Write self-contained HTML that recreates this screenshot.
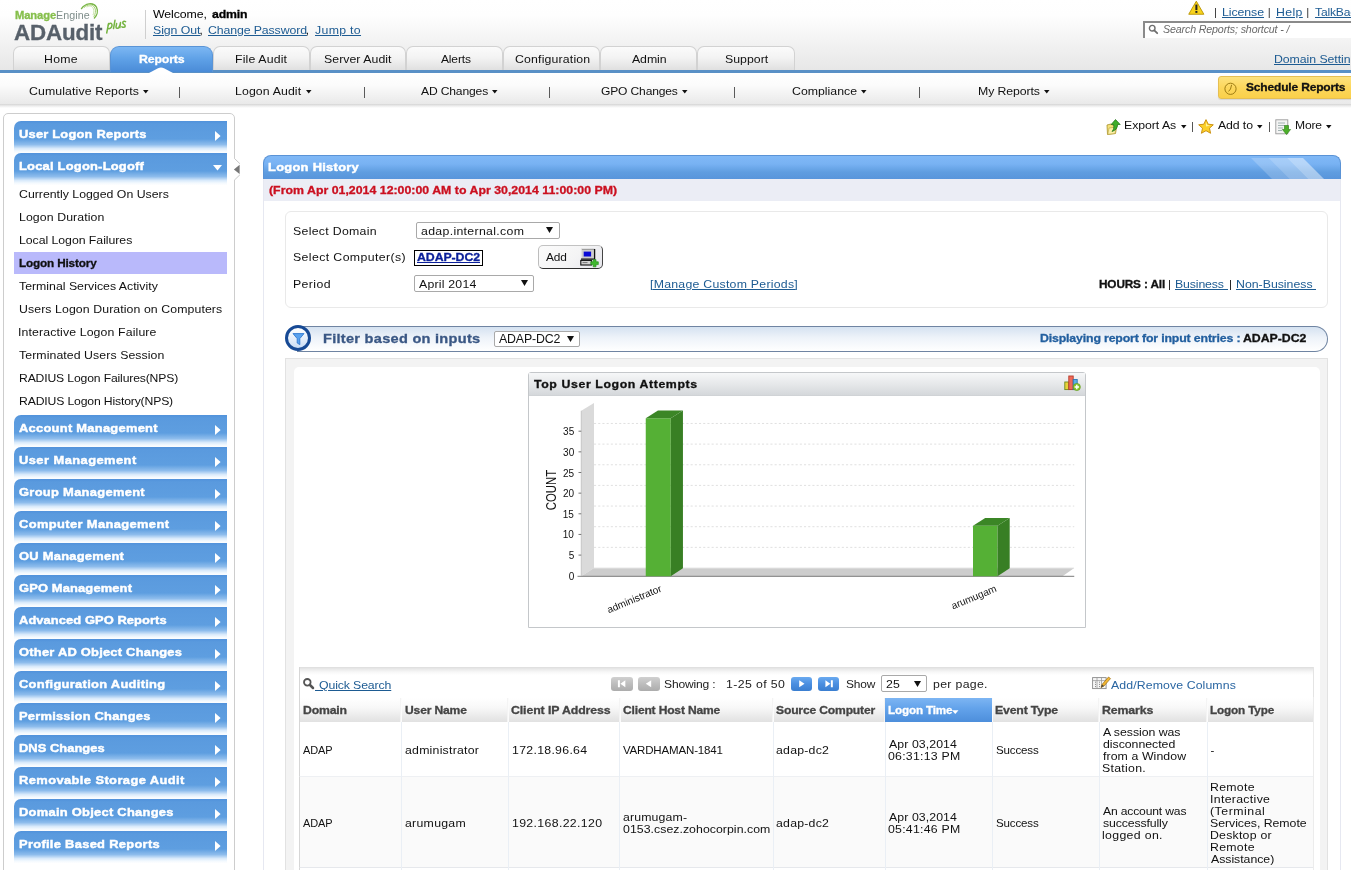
<!DOCTYPE html>
<html><head><meta charset="utf-8"><title>ADAudit Plus - Logon History</title>
<style>
html,body{margin:0;padding:0;background:#fff}
body{width:1351px;height:870px;overflow:hidden;position:relative;font-family:"Liberation Sans",sans-serif;font-size:11.5px;color:#000}
#pg{position:absolute;left:0;top:0;width:1351px;height:870px;overflow:hidden;will-change:transform}
.a{position:absolute;box-sizing:border-box}
.t{position:absolute;white-space:pre;line-height:1;transform-origin:0 0}
svg{position:absolute;overflow:visible}
</style></head>
<body>
<div id="pg">
<div class="a" style="left:0px;top:0px;width:1351px;height:70px;background:linear-gradient(to bottom,#ffffff 0%,#fefefe 22%,#f4f4f4 55%,#e7e7e7 100%);"></div>
<svg style="left:0;top:0" width="140" height="45" viewBox="0 0 140 45" fill="none" stroke-linecap="round"><path d="M81.5 8.6 C85 3.6,93 1.6,96.4 7 C98.4 11,97 15.5,94.4 18" stroke="#7ab648" stroke-width="1.4"/><path d="M84.2 7.4 C87.5 4.2,92.5 3.7,94.9 8 C96.2 11,95.4 14,93.9 16.4" stroke="#9ccc66" stroke-width="0.9"/><path d="M87 6.9 C89.5 5.3,92 5.6,93.4 8.8 C94.2 11,93.9 13,93.1 14.7" stroke="#b5da8a" stroke-width="0.7"/><g stroke="#76b442" stroke-width="1.5" stroke-linejoin="round"><path d="M108.6 23.4 L106.7 33"/><path d="M108.3 25 C109.5 22.8,112.2 22.6,112 25.4 C111.8 27.8,109.6 29.2,107.8 28.4"/><path d="M115 20.2 L113.5 28.6"/><path d="M116.6 23.6 L116 26.8 C115.8 28.6,117.6 28.8,118.8 27.4 C119.8 26,120.2 24.4,120.5 22.6 M120.5 22.6 L119.9 27.6"/><path d="M125.6 21.6 C124 20.8,122.4 21.6,122.8 23 C123.2 24.4,125.2 24.4,125.2 26 C125.2 27.6,123 27.6,121.9 26.8"/></g></svg>
<span class="t" style="left:14.52px;top:11px;font-size:10px;letter-spacing:-0.097px;transform:scaleX(1.1200);font-weight:bold;-webkit-text-stroke:0.3px;color:#86bf4c;">Manage</span>
<span class="t" style="left:55.64px;top:11px;font-size:10px;letter-spacing:0.057px;transform:scaleX(1.0700);color:#7e8d8a;">Engine</span>
<span class="t" style="left:14.33px;top:22px;font-size:22px;letter-spacing:-0.150px;transform:scaleX(1.0148);font-weight:bold;-webkit-text-stroke:0.3px;color:#57606a;">ADAudit</span>
<div class="a" style="left:145px;top:10px;width:1px;height:29px;background:#cfcfcf;"></div>
<span class="t" style="left:153.25px;top:9px;font-size:11.5px;letter-spacing:-0.087px;transform:scaleX(1.0700);">Welcome,</span>
<span class="t" style="left:211.63px;top:9px;font-size:11px;letter-spacing:-0.150px;transform:scaleX(1.1138);font-weight:bold;-webkit-text-stroke:0.3px;">admin</span>
<span class="t" style="left:152.63px;top:25px;font-size:11.5px;letter-spacing:-0.050px;transform:scaleX(1.0700);color:#1d5b92;text-decoration:underline;">Sign Out</span>
<span class="t" style="left:199.47px;top:25px;font-size:11.5px;">,</span>
<span class="t" style="left:208.13px;top:25px;font-size:11.5px;letter-spacing:-0.104px;transform:scaleX(1.0700);color:#1d5b92;text-decoration:underline;">Change Password</span>
<span class="t" style="left:305.71px;top:25px;font-size:11.5px;">,</span>
<span class="t" style="left:314.75px;top:25px;font-size:11.5px;letter-spacing:0.301px;transform:scaleX(1.0700);color:#1d5b92;text-decoration:underline;">Jump to</span>
<svg style="left:1188.3px;top:0px" width="16.6" height="15.6" viewBox="0 0 18 16"><path d="M9 0.8 L17.2 15 L0.8 15Z" fill="#f7d21c" stroke="#b89400" stroke-width="1" stroke-linejoin="round"/><rect x="8" y="4.5" width="2.2" height="6" fill="#222"/><rect x="8" y="11.5" width="2.2" height="2" fill="#222"/></svg>
<span class="t" style="left:1213.96px;top:7px;font-size:11.5px;color:#333;">|</span>
<span class="t" style="left:1221.77px;top:7px;font-size:11.5px;letter-spacing:-0.055px;transform:scaleX(1.0700);color:#1d5b92;text-decoration:underline;">License</span>
<span class="t" style="left:1267.66px;top:7px;font-size:11.5px;color:#333;">|</span>
<span class="t" style="left:1275.52px;top:7px;font-size:11.5px;letter-spacing:0.351px;transform:scaleX(1.0700);color:#1d5b92;text-decoration:underline;">Help</span>
<span class="t" style="left:1306.16px;top:7px;font-size:11.5px;color:#333;">|</span>
<span class="t" style="left:1314.51px;top:7px;font-size:11.5px;letter-spacing:-0.150px;transform:scaleX(1.0510);color:#1d5b92;text-decoration:underline;">TalkBack</span>
<div class="a" style="left:1143px;top:20.5px;width:230px;height:17px;background:#fff;border-top:2px solid #8a8a8a;border-left:2px solid #8a8a8a;"></div>
<svg style="left:1148px;top:24px" width="11" height="11" viewBox="0 0 11 11"><circle cx="4.2" cy="4.2" r="2.8" fill="none" stroke="#6e6e6e" stroke-width="1.4"/><path d="M6.3 6.3 L9.2 9.2" stroke="#6e6e6e" stroke-width="1.8" stroke-linecap="round"/></svg>
<span class="t" style="left:1162.93px;top:24px;font-size:10.5px;letter-spacing:-0.150px;transform:scaleX(1.0169);font-style:italic;color:#6a6a6a;">Search Reports; shortcut - /</span>
<span class="t" style="left:1273.77px;top:54px;font-size:11.5px;letter-spacing:-0.056px;transform:scaleX(1.0700);color:#1d5b92;text-decoration:underline;">Domain Settings</span>
<div class="a" style="left:13px;top:46px;width:97px;height:24.5px;border:1px solid #d2d2d2;border-bottom:none;border-radius:7px 7px 0 0;background:linear-gradient(to bottom,#fbfbfb 0%,#f3f3f3 45%,#dedede 100%);"></div>
<span class="t" style="left:44.02px;top:54px;font-size:11.5px;letter-spacing:0.232px;transform:scaleX(1.0700);color:#111;">Home</span>
<div class="a" style="left:213px;top:46px;width:96.5px;height:24.5px;border:1px solid #d2d2d2;border-bottom:none;border-radius:7px 7px 0 0;background:linear-gradient(to bottom,#fbfbfb 0%,#f3f3f3 45%,#dedede 100%);"></div>
<span class="t" style="left:234.77px;top:54px;font-size:11.5px;letter-spacing:0.147px;transform:scaleX(1.0700);color:#111;">File Audit</span>
<div class="a" style="left:309.5px;top:46px;width:96.5px;height:24.5px;border:1px solid #d2d2d2;border-bottom:none;border-radius:7px 7px 0 0;background:linear-gradient(to bottom,#fbfbfb 0%,#f3f3f3 45%,#dedede 100%);"></div>
<span class="t" style="left:324.38px;top:54px;font-size:11.5px;letter-spacing:0.036px;transform:scaleX(1.0700);color:#111;">Server Audit</span>
<div class="a" style="left:406px;top:46px;width:97px;height:24.5px;border:1px solid #d2d2d2;border-bottom:none;border-radius:7px 7px 0 0;background:linear-gradient(to bottom,#fbfbfb 0%,#f3f3f3 45%,#dedede 100%);"></div>
<span class="t" style="left:440.50px;top:54px;font-size:11.5px;letter-spacing:-0.150px;transform:scaleX(1.0450);color:#111;">Alerts</span>
<div class="a" style="left:503px;top:46px;width:97px;height:24.5px;border:1px solid #d2d2d2;border-bottom:none;border-radius:7px 7px 0 0;background:linear-gradient(to bottom,#fbfbfb 0%,#f3f3f3 45%,#dedede 100%);"></div>
<span class="t" style="left:514.88px;top:54px;font-size:11.5px;letter-spacing:0.157px;transform:scaleX(1.0700);color:#111;">Configuration</span>
<div class="a" style="left:600px;top:46px;width:97px;height:24.5px;border:1px solid #d2d2d2;border-bottom:none;border-radius:7px 7px 0 0;background:linear-gradient(to bottom,#fbfbfb 0%,#f3f3f3 45%,#dedede 100%);"></div>
<span class="t" style="left:632.25px;top:54px;font-size:11.5px;letter-spacing:-0.078px;transform:scaleX(1.0700);color:#111;">Admin</span>
<div class="a" style="left:697px;top:46px;width:97.5px;height:24.5px;border:1px solid #d2d2d2;border-bottom:none;border-radius:7px 7px 0 0;background:linear-gradient(to bottom,#fbfbfb 0%,#f3f3f3 45%,#dedede 100%);"></div>
<span class="t" style="left:724.63px;top:54px;font-size:11.5px;letter-spacing:0.027px;transform:scaleX(1.0700);color:#111;">Support</span>
<div class="a" style="left:0px;top:70px;width:1351px;height:3px;background:#5990c6;"></div>
<div class="a" style="left:110px;top:45.5px;width:103px;height:26.5px;border:1px solid #5a94d6;border-bottom:none;border-radius:9px 9px 0 0;background:linear-gradient(to bottom,#7cb7f3 0%,#5ea0e6 50%,#4a8bd7 100%);"></div>
<span class="t" style="left:138.64px;top:54px;font-size:11px;letter-spacing:-0.144px;transform:scaleX(1.1200);font-weight:bold;-webkit-text-stroke:0.3px;color:#fff;">Reports</span>
<svg style="left:149px;top:67px" width="24" height="6" viewBox="0 0 24 6"><path d="M0 6 L9 1.2 Q12 -0.4 15 1.2 L24 6Z" fill="#fff"/></svg>
<div class="a" style="left:0px;top:73px;width:1351px;height:30.5px;background:linear-gradient(to bottom,#ffffff 0%,#fbfbfb 40%,#e9e9e9 100%);"></div>
<div class="a" style="left:0px;top:103.5px;width:1351px;height:4px;background:linear-gradient(to bottom,#d4d4d4 0%,#ededed 50%,#ffffff 100%);"></div>
<span class="t" style="left:28.88px;top:86px;font-size:11.5px;letter-spacing:0.100px;transform:scaleX(1.0700);color:#111;">Cumulative Reports</span>
<svg style="left:142.5px;top:90px" width="5.5" height="3.5" viewBox="0 0 10 6"><path d="M0 0 L10 0 L5 6Z" fill="#111"/></svg>
<span class="t" style="left:235.27px;top:86px;font-size:11.5px;letter-spacing:0.106px;transform:scaleX(1.0700);color:#111;">Logon Audit</span>
<svg style="left:305.5px;top:90px" width="5.5" height="3.5" viewBox="0 0 10 6"><path d="M0 0 L10 0 L5 6Z" fill="#111"/></svg>
<span class="t" style="left:420.50px;top:86px;font-size:11.5px;letter-spacing:-0.150px;transform:scaleX(1.0529);color:#111;">AD Changes</span>
<svg style="left:491.5px;top:90px" width="5.5" height="3.5" viewBox="0 0 10 6"><path d="M0 0 L10 0 L5 6Z" fill="#111"/></svg>
<span class="t" style="left:601.15px;top:86px;font-size:11.5px;letter-spacing:-0.150px;transform:scaleX(1.0490);color:#111;">GPO Changes</span>
<svg style="left:681.5px;top:90px" width="5.5" height="3.5" viewBox="0 0 10 6"><path d="M0 0 L10 0 L5 6Z" fill="#111"/></svg>
<span class="t" style="left:791.63px;top:86px;font-size:11.5px;transform:scaleX(1.0700);color:#111;">Compliance</span>
<svg style="left:860.5px;top:90px" width="5.5" height="3.5" viewBox="0 0 10 6"><path d="M0 0 L10 0 L5 6Z" fill="#111"/></svg>
<span class="t" style="left:977.52px;top:86px;font-size:11.5px;letter-spacing:-0.094px;transform:scaleX(1.0700);color:#111;">My Reports</span>
<svg style="left:1043.5px;top:90px" width="5.5" height="3.5" viewBox="0 0 10 6"><path d="M0 0 L10 0 L5 6Z" fill="#111"/></svg>
<div class="a" style="left:178.75px;top:87px;width:1px;height:10.5px;background:#5a5a5a;"></div>
<div class="a" style="left:363.75px;top:87px;width:1px;height:10.5px;background:#5a5a5a;"></div>
<div class="a" style="left:548.75px;top:87px;width:1px;height:10.5px;background:#5a5a5a;"></div>
<div class="a" style="left:733.75px;top:87px;width:1px;height:10.5px;background:#5a5a5a;"></div>
<div class="a" style="left:918.75px;top:87px;width:1px;height:10.5px;background:#5a5a5a;"></div>
<div class="a" style="left:1218px;top:76px;width:140px;height:23px;border:1px solid #e6bf52;border-radius:3px;background:linear-gradient(to bottom,#fde27e 0%,#fcd75c 50%,#fad04a 100%);box-shadow:0 1px 1px rgba(0,0,0,.10);"></div>
<svg style="left:1224px;top:82px" width="13" height="13" viewBox="0 0 13 13"><circle cx="6.5" cy="6.8" r="5.6" fill="none" stroke="#92700a" stroke-width="0.9"/><path d="M7.6 2.8 L6.5 7 L4.6 9.4" fill="none" stroke="#92700a" stroke-width="0.9"/></svg>
<span class="t" style="left:1246.14px;top:82px;font-size:11px;letter-spacing:-0.150px;transform:scaleX(1.0901);font-weight:bold;-webkit-text-stroke:0.3px;color:#111;">Schedule Reports</span>
<div class="a" style="left:3px;top:112.5px;width:231.5px;height:770px;border:1px solid #cdcdcd;border-radius:5px;background:#fff;"></div>
<div class="a" style="left:14px;top:121px;width:212.5px;height:32px;border-radius:7px 0 0 0;background:linear-gradient(to bottom,#5192db 0,#5a9ade 3px,#5e9ee0 18px,#8dbcec 23.5px,#d9eafb 27.5px,#f3f9fe 30px,#fdfeff 32px);"></div>
<span class="t" style="left:18.73px;top:129px;font-size:11.5px;letter-spacing:0.191px;transform:scaleX(1.1200);font-weight:bold;-webkit-text-stroke:0.3px;color:#fff;-webkit-text-stroke:0.45px #fff;">User Logon Reports</span>
<svg style="left:214.5px;top:130.5px" width="6" height="10" viewBox="0 0 6 10"><path d="M0 0 L5.6 5 L0 10Z" fill="#fff"/></svg>
<div class="a" style="left:14px;top:153px;width:212.5px;height:32px;border-radius:7px 0 0 0;background:linear-gradient(to bottom,#5192db 0,#5a9ade 3px,#5e9ee0 18px,#8dbcec 23.5px,#d9eafb 27.5px,#f3f9fe 30px,#fdfeff 32px);"></div>
<span class="t" style="left:18.60px;top:161px;font-size:11.5px;letter-spacing:0.208px;transform:scaleX(1.1200);font-weight:bold;-webkit-text-stroke:0.3px;color:#fff;-webkit-text-stroke:0.45px #fff;">Local Logon-Logoff</span>
<svg style="left:212.5px;top:164.5px" width="9" height="6" viewBox="0 0 9 6"><path d="M0 0 L9 0 L4.5 5.6Z" fill="#fff"/></svg>
<span class="t" style="left:18.88px;top:189px;font-size:11.5px;transform:scaleX(1.0700);color:#111;">Currently Logged On Users</span>
<span class="t" style="left:18.52px;top:212px;font-size:11.5px;letter-spacing:0.085px;transform:scaleX(1.0700);color:#111;">Logon Duration</span>
<span class="t" style="left:18.52px;top:235px;font-size:11.5px;letter-spacing:-0.047px;transform:scaleX(1.0700);color:#111;">Local Logon Failures</span>
<div class="a" style="left:14px;top:251.75px;width:212.5px;height:22.5px;background:#b9b9fb;"></div>
<span class="t" style="left:18.68px;top:258px;font-size:11px;letter-spacing:-0.150px;transform:scaleX(1.0675);font-weight:bold;-webkit-text-stroke:0.3px;color:#111;">Logon History</span>
<span class="t" style="left:19.25px;top:281px;font-size:11.5px;transform:scaleX(1.0700);color:#111;">Terminal Services Activity</span>
<span class="t" style="left:18.52px;top:304px;font-size:11.5px;letter-spacing:0.081px;transform:scaleX(1.0700);color:#111;">Users Logon Duration on Computers</span>
<span class="t" style="left:18.39px;top:327px;font-size:11.5px;letter-spacing:0.117px;transform:scaleX(1.0700);color:#111;">Interactive Logon Failure</span>
<span class="t" style="left:19.25px;top:350px;font-size:11.5px;letter-spacing:0.071px;transform:scaleX(1.0700);color:#111;">Terminated Users Session</span>
<span class="t" style="left:18.53px;top:373px;font-size:11.5px;letter-spacing:-0.150px;transform:scaleX(1.0597);color:#111;">RADIUS Logon Failures(NPS)</span>
<span class="t" style="left:18.52px;top:396px;font-size:11.5px;letter-spacing:-0.150px;transform:scaleX(1.0611);color:#111;">RADIUS Logon History(NPS)</span>
<div class="a" style="left:14px;top:415px;width:212.5px;height:32px;border-radius:7px 0 0 0;background:linear-gradient(to bottom,#5192db 0,#5a9ade 3px,#5e9ee0 18px,#8dbcec 23.5px,#d9eafb 27.5px,#f3f9fe 30px,#fdfeff 32px);"></div>
<span class="t" style="left:19.11px;top:423px;font-size:11.5px;letter-spacing:0.246px;transform:scaleX(1.1200);font-weight:bold;-webkit-text-stroke:0.3px;color:#fff;-webkit-text-stroke:0.45px #fff;">Account Management</span>
<svg style="left:214.5px;top:424.5px" width="6" height="10" viewBox="0 0 6 10"><path d="M0 0 L5.6 5 L0 10Z" fill="#fff"/></svg>
<div class="a" style="left:14px;top:447px;width:212.5px;height:32px;border-radius:7px 0 0 0;background:linear-gradient(to bottom,#5192db 0,#5a9ade 3px,#5e9ee0 18px,#8dbcec 23.5px,#d9eafb 27.5px,#f3f9fe 30px,#fdfeff 32px);"></div>
<span class="t" style="left:18.73px;top:455px;font-size:11.5px;letter-spacing:0.399px;transform:scaleX(1.1200);font-weight:bold;-webkit-text-stroke:0.3px;color:#fff;-webkit-text-stroke:0.45px #fff;">User Management</span>
<svg style="left:214.5px;top:456.5px" width="6" height="10" viewBox="0 0 6 10"><path d="M0 0 L5.6 5 L0 10Z" fill="#fff"/></svg>
<div class="a" style="left:14px;top:479px;width:212.5px;height:32px;border-radius:7px 0 0 0;background:linear-gradient(to bottom,#5192db 0,#5a9ade 3px,#5e9ee0 18px,#8dbcec 23.5px,#d9eafb 27.5px,#f3f9fe 30px,#fdfeff 32px);"></div>
<span class="t" style="left:18.98px;top:487px;font-size:11.5px;letter-spacing:0.280px;transform:scaleX(1.1200);font-weight:bold;-webkit-text-stroke:0.3px;color:#fff;-webkit-text-stroke:0.45px #fff;">Group Management</span>
<svg style="left:214.5px;top:488.5px" width="6" height="10" viewBox="0 0 6 10"><path d="M0 0 L5.6 5 L0 10Z" fill="#fff"/></svg>
<div class="a" style="left:14px;top:511px;width:212.5px;height:32px;border-radius:7px 0 0 0;background:linear-gradient(to bottom,#5192db 0,#5a9ade 3px,#5e9ee0 18px,#8dbcec 23.5px,#d9eafb 27.5px,#f3f9fe 30px,#fdfeff 32px);"></div>
<span class="t" style="left:18.98px;top:519px;font-size:11.5px;letter-spacing:0.337px;transform:scaleX(1.1200);font-weight:bold;-webkit-text-stroke:0.3px;color:#fff;-webkit-text-stroke:0.45px #fff;">Computer Management</span>
<svg style="left:214.5px;top:520.5px" width="6" height="10" viewBox="0 0 6 10"><path d="M0 0 L5.6 5 L0 10Z" fill="#fff"/></svg>
<div class="a" style="left:14px;top:543px;width:212.5px;height:32px;border-radius:7px 0 0 0;background:linear-gradient(to bottom,#5192db 0,#5a9ade 3px,#5e9ee0 18px,#8dbcec 23.5px,#d9eafb 27.5px,#f3f9fe 30px,#fdfeff 32px);"></div>
<span class="t" style="left:18.98px;top:551px;font-size:11.5px;letter-spacing:0.243px;transform:scaleX(1.1200);font-weight:bold;-webkit-text-stroke:0.3px;color:#fff;-webkit-text-stroke:0.45px #fff;">OU Management</span>
<svg style="left:214.5px;top:552.5px" width="6" height="10" viewBox="0 0 6 10"><path d="M0 0 L5.6 5 L0 10Z" fill="#fff"/></svg>
<div class="a" style="left:14px;top:575px;width:212.5px;height:32px;border-radius:7px 0 0 0;background:linear-gradient(to bottom,#5192db 0,#5a9ade 3px,#5e9ee0 18px,#8dbcec 23.5px,#d9eafb 27.5px,#f3f9fe 30px,#fdfeff 32px);"></div>
<span class="t" style="left:18.98px;top:583px;font-size:11.5px;letter-spacing:0.137px;transform:scaleX(1.1200);font-weight:bold;-webkit-text-stroke:0.3px;color:#fff;-webkit-text-stroke:0.45px #fff;">GPO Management</span>
<svg style="left:214.5px;top:584.5px" width="6" height="10" viewBox="0 0 6 10"><path d="M0 0 L5.6 5 L0 10Z" fill="#fff"/></svg>
<div class="a" style="left:14px;top:607px;width:212.5px;height:32px;border-radius:7px 0 0 0;background:linear-gradient(to bottom,#5192db 0,#5a9ade 3px,#5e9ee0 18px,#8dbcec 23.5px,#d9eafb 27.5px,#f3f9fe 30px,#fdfeff 32px);"></div>
<span class="t" style="left:19.11px;top:615px;font-size:11.5px;letter-spacing:0.075px;transform:scaleX(1.1200);font-weight:bold;-webkit-text-stroke:0.3px;color:#fff;-webkit-text-stroke:0.45px #fff;">Advanced GPO Reports</span>
<svg style="left:214.5px;top:616.5px" width="6" height="10" viewBox="0 0 6 10"><path d="M0 0 L5.6 5 L0 10Z" fill="#fff"/></svg>
<div class="a" style="left:14px;top:639px;width:212.5px;height:32px;border-radius:7px 0 0 0;background:linear-gradient(to bottom,#5192db 0,#5a9ade 3px,#5e9ee0 18px,#8dbcec 23.5px,#d9eafb 27.5px,#f3f9fe 30px,#fdfeff 32px);"></div>
<span class="t" style="left:18.98px;top:647px;font-size:11.5px;letter-spacing:0.213px;transform:scaleX(1.1200);font-weight:bold;-webkit-text-stroke:0.3px;color:#fff;-webkit-text-stroke:0.45px #fff;">Other AD Object Changes</span>
<svg style="left:214.5px;top:648.5px" width="6" height="10" viewBox="0 0 6 10"><path d="M0 0 L5.6 5 L0 10Z" fill="#fff"/></svg>
<div class="a" style="left:14px;top:671px;width:212.5px;height:32px;border-radius:7px 0 0 0;background:linear-gradient(to bottom,#5192db 0,#5a9ade 3px,#5e9ee0 18px,#8dbcec 23.5px,#d9eafb 27.5px,#f3f9fe 30px,#fdfeff 32px);"></div>
<span class="t" style="left:18.98px;top:679px;font-size:11.5px;letter-spacing:0.273px;transform:scaleX(1.1200);font-weight:bold;-webkit-text-stroke:0.3px;color:#fff;-webkit-text-stroke:0.45px #fff;">Configuration Auditing</span>
<svg style="left:214.5px;top:680.5px" width="6" height="10" viewBox="0 0 6 10"><path d="M0 0 L5.6 5 L0 10Z" fill="#fff"/></svg>
<div class="a" style="left:14px;top:703px;width:212.5px;height:32px;border-radius:7px 0 0 0;background:linear-gradient(to bottom,#5192db 0,#5a9ade 3px,#5e9ee0 18px,#8dbcec 23.5px,#d9eafb 27.5px,#f3f9fe 30px,#fdfeff 32px);"></div>
<span class="t" style="left:18.60px;top:711px;font-size:11.5px;letter-spacing:0.205px;transform:scaleX(1.1200);font-weight:bold;-webkit-text-stroke:0.3px;color:#fff;-webkit-text-stroke:0.45px #fff;">Permission Changes</span>
<svg style="left:214.5px;top:712.5px" width="6" height="10" viewBox="0 0 6 10"><path d="M0 0 L5.6 5 L0 10Z" fill="#fff"/></svg>
<div class="a" style="left:14px;top:735px;width:212.5px;height:32px;border-radius:7px 0 0 0;background:linear-gradient(to bottom,#5192db 0,#5a9ade 3px,#5e9ee0 18px,#8dbcec 23.5px,#d9eafb 27.5px,#f3f9fe 30px,#fdfeff 32px);"></div>
<span class="t" style="left:18.60px;top:743px;font-size:11.5px;letter-spacing:0.036px;transform:scaleX(1.1200);font-weight:bold;-webkit-text-stroke:0.3px;color:#fff;-webkit-text-stroke:0.45px #fff;">DNS Changes</span>
<svg style="left:214.5px;top:744.5px" width="6" height="10" viewBox="0 0 6 10"><path d="M0 0 L5.6 5 L0 10Z" fill="#fff"/></svg>
<div class="a" style="left:14px;top:767px;width:212.5px;height:32px;border-radius:7px 0 0 0;background:linear-gradient(to bottom,#5192db 0,#5a9ade 3px,#5e9ee0 18px,#8dbcec 23.5px,#d9eafb 27.5px,#f3f9fe 30px,#fdfeff 32px);"></div>
<span class="t" style="left:18.60px;top:775px;font-size:11.5px;letter-spacing:0.367px;transform:scaleX(1.1200);font-weight:bold;-webkit-text-stroke:0.3px;color:#fff;-webkit-text-stroke:0.45px #fff;">Removable Storage Audit</span>
<svg style="left:214.5px;top:776.5px" width="6" height="10" viewBox="0 0 6 10"><path d="M0 0 L5.6 5 L0 10Z" fill="#fff"/></svg>
<div class="a" style="left:14px;top:799px;width:212.5px;height:32px;border-radius:7px 0 0 0;background:linear-gradient(to bottom,#5192db 0,#5a9ade 3px,#5e9ee0 18px,#8dbcec 23.5px,#d9eafb 27.5px,#f3f9fe 30px,#fdfeff 32px);"></div>
<span class="t" style="left:18.60px;top:807px;font-size:11.5px;letter-spacing:0.247px;transform:scaleX(1.1200);font-weight:bold;-webkit-text-stroke:0.3px;color:#fff;-webkit-text-stroke:0.45px #fff;">Domain Object Changes</span>
<svg style="left:214.5px;top:808.5px" width="6" height="10" viewBox="0 0 6 10"><path d="M0 0 L5.6 5 L0 10Z" fill="#fff"/></svg>
<div class="a" style="left:14px;top:831px;width:212.5px;height:32px;border-radius:7px 0 0 0;background:linear-gradient(to bottom,#5192db 0,#5a9ade 3px,#5e9ee0 18px,#8dbcec 23.5px,#d9eafb 27.5px,#f3f9fe 30px,#fdfeff 32px);"></div>
<span class="t" style="left:18.60px;top:839px;font-size:11.5px;letter-spacing:0.271px;transform:scaleX(1.1200);font-weight:bold;-webkit-text-stroke:0.3px;color:#fff;-webkit-text-stroke:0.45px #fff;">Profile Based Reports</span>
<svg style="left:214.5px;top:840.5px" width="6" height="10" viewBox="0 0 6 10"><path d="M0 0 L5.6 5 L0 10Z" fill="#fff"/></svg>
<svg style="left:233px;top:158px" width="8" height="23" viewBox="0 0 8 23"><path d="M0 0 L1.5 0.5 L6.9 5.7 L6.9 16.8 L1.5 22 L0 22.5Z" fill="#fff"/><path d="M1.4 0.4 L6.9 5.7 M6.9 16.8 L1.4 22.1" fill="none" stroke="#c8c8c8" stroke-width="1"/><path d="M0.9 11.4 L6.6 6.8 L6.6 16Z" fill="#777"/></svg>
<svg style="left:1106px;top:118.5px" width="15" height="16" viewBox="0 0 15 16"><path d="M1 6 L5 5 L6.5 6 L11 5.5 L9.5 14.5 L1.5 15.5Z" fill="#f5e27a" stroke="#a8912a" stroke-width="0.8"/><path d="M3 9 L10 8 L9 14.5 L1.8 15.3Z" fill="#fbf0a8" stroke="#b9a340" stroke-width="0.6"/><path d="M9.5 0.5 L14.2 5.5 L11.6 5.5 C11.6 9,9.5 11.5,6 12.5 C8 10.5,8 8,7.6 5.5 L5.2 5.5Z" fill="#3fae2a" stroke="#1d6e12" stroke-width="0.7"/></svg>
<span class="t" style="left:1124.27px;top:120px;font-size:11.5px;letter-spacing:-0.051px;transform:scaleX(1.0700);color:#111;">Export As</span>
<svg style="left:1180.5px;top:124.5px" width="5.5" height="3.5" viewBox="0 0 10 6"><path d="M0 0 L10 0 L5 6Z" fill="#111"/></svg>
<div class="a" style="left:1191.5px;top:121.5px;width:1px;height:10px;background:#555;"></div>
<svg style="left:1198px;top:119px" width="16" height="15" viewBox="0 0 16 15"><path d="M8 0.6 L10.2 5.2 L15.3 5.8 L11.5 9.2 L12.6 14.3 L8 11.7 L3.4 14.3 L4.5 9.2 L0.7 5.8 L5.8 5.2Z" fill="#fbd02a" stroke="#c78a07" stroke-width="0.9" stroke-linejoin="round"/><path d="M8 3 L9.3 6 L12.5 6.4 L8 7.5Z" fill="#fff2a0"/></svg>
<span class="t" style="left:1218.25px;top:120px;font-size:11.5px;letter-spacing:-0.106px;transform:scaleX(1.0700);color:#111;">Add to</span>
<svg style="left:1257.25px;top:124.5px" width="5.5" height="3.5" viewBox="0 0 10 6"><path d="M0 0 L10 0 L5 6Z" fill="#111"/></svg>
<div class="a" style="left:1268.5px;top:121.5px;width:1px;height:10px;background:#555;"></div>
<svg style="left:1275px;top:118.5px" width="16" height="16" viewBox="0 0 16 16"><rect x="0.8" y="0.8" width="12" height="14" fill="#f4f4f4" stroke="#9a9a9a" stroke-width="0.9"/><path d="M3 4 H10 M3 6.5 H10 M3 9 H8 M3 11.5 H7" stroke="#9aa" stroke-width="0.9"/><path d="M9.5 6.5 H13.5 V10.5 H15.6 L11.5 15.6 L7.4 10.5 H9.5Z" fill="#4caf2a" stroke="#2a7a14" stroke-width="0.6"/></svg>
<span class="t" style="left:1295.03px;top:120px;font-size:11.5px;letter-spacing:-0.150px;transform:scaleX(1.0505);color:#111;">More</span>
<svg style="left:1326px;top:124.5px" width="5.5" height="3.5" viewBox="0 0 10 6"><path d="M0 0 L10 0 L5 6Z" fill="#111"/></svg>
<div class="a" style="left:263px;top:166px;width:1078px;height:740px;border:1px solid #e6e8f1;border-top:none;background:#fff;"></div>
<div class="a" style="left:263px;top:155px;width:1078px;height:24px;border-radius:8px 8px 0 0;border:1px solid #5a93d6;border-bottom:none;background:linear-gradient(to bottom,#80b8f6 0%,#78b2f3 35%,#5f9de0 70%,#5895db 100%);overflow:hidden;"><svg style="left:987px;top:-1px" width="80" height="24" viewBox="0 0 80 24"><path d="M0 3 L17.5 3 L38.5 24 L21 24Z" fill="#fff" opacity=".2"/><path d="M17.5 3 L36 3 L57 24 L38.5 24Z" fill="#fff" opacity=".32"/><path d="M36 3 L52 3 L73 24 L57 24Z" fill="#fff" opacity=".46"/></svg></div>
<span class="t" style="left:267.85px;top:162px;font-size:11.5px;letter-spacing:0.257px;transform:scaleX(1.1200);font-weight:bold;-webkit-text-stroke:0.3px;color:#fff;-webkit-text-stroke:0.45px #fff;">Logon History</span>
<div class="a" style="left:264px;top:179px;width:1076px;height:21.5px;background:#ebedf5;"></div>
<span class="t" style="left:269.38px;top:185px;font-size:11px;letter-spacing:0.015px;transform:scaleX(1.1200);font-weight:bold;-webkit-text-stroke:0.3px;color:#cb1020;">(From Apr 01,2014 12:00:00 AM to Apr 30,2014 11:00:00 PM)</span>
<div class="a" style="left:285px;top:210.5px;width:1043px;height:97.5px;border:1px solid #e9e9e9;border-radius:6px;background:#fff;"></div>
<span class="t" style="left:293.13px;top:226px;font-size:11.5px;letter-spacing:0.282px;transform:scaleX(1.0700);color:#111;">Select Domain</span>
<span class="t" style="left:293.13px;top:252px;font-size:11.5px;letter-spacing:0.366px;transform:scaleX(1.0700);color:#111;">Select Computer(s)</span>
<span class="t" style="left:292.77px;top:279px;font-size:11.5px;letter-spacing:0.380px;transform:scaleX(1.0700);color:#111;">Period</span>
<div class="a" style="left:416px;top:222px;width:143.5px;height:16.5px;border:1px solid #a9a9a9;border-radius:2px;background:#fff;"></div>
<span class="t" style="left:420.76px;top:226px;font-size:11.5px;letter-spacing:0.301px;transform:scaleX(1.0700);color:#111;">adap.internal.com</span>
<svg style="left:546.25px;top:227px" width="7" height="6" viewBox="0 0 7 6"><path d="M0 0 L7 0 L3.5 6Z" fill="#111"/></svg>
<div class="a" style="left:414px;top:250px;width:69px;height:16px;border:1px solid #000;background:#fff;"></div>
<span class="t" style="left:417.13px;top:252px;font-size:11px;letter-spacing:-0.074px;transform:scaleX(1.1200);font-weight:bold;-webkit-text-stroke:0.3px;color:#0a1f9a;text-decoration:underline;">ADAP-DC2</span>
<div class="a" style="left:538px;top:245px;width:65px;height:24px;border:1px solid;border-color:#c2c2c2 #444 #2e2e2e #bdbdbd;border-bottom-width:1.5px;border-radius:5px;background:linear-gradient(135deg,#fbfbfb 0%,#f4f4f5 55%,#e6e6ec 100%);"></div>
<span class="t" style="left:546.30px;top:252px;font-size:11.5px;letter-spacing:-0.150px;transform:scaleX(1.0328);color:#111;">Add</span>
<svg style="left:579px;top:248px" width="20" height="19" viewBox="0 0 20 19"><rect x="2" y="1" width="14" height="10.4" fill="#cdcdcd"/><path d="M2.2 1.3 H15.6" fill="none" stroke="#8a8a8a" stroke-width="0.9"/><path d="M2.4 1 V11.2" stroke="#e8e8e8" stroke-width="0.9"/><path d="M15.6 1 V11.4 M2 11.2 H16" stroke="#111" stroke-width="1.3"/><rect x="4.7" y="3.6" width="7.4" height="4.9" fill="#0a0ad6"/><rect x="1.8" y="12.4" width="10.6" height="4.6" fill="#d4d4d4" stroke="#111" stroke-width="1.1"/><path d="M3.5 14.6 H8.5" stroke="#777" stroke-width="1"/><path d="M14.2 11.6 H17 V13.8 H19.3 V16.6 H17 V18.8 H14.2 V16.6 H11.9 V13.8 H14.2Z" fill="#3fb82e" stroke="#2a9220" stroke-width="0.7" stroke-linejoin="round"/></svg>
<div class="a" style="left:414px;top:275px;width:120px;height:16.5px;border:1px solid #a9a9a9;border-radius:2px;background:#fff;"></div>
<span class="t" style="left:419.25px;top:279px;font-size:11.5px;letter-spacing:0.195px;transform:scaleX(1.0700);color:#111;">April 2014</span>
<svg style="left:520.5px;top:280px" width="7" height="6" viewBox="0 0 7 6"><path d="M0 0 L7 0 L3.5 6Z" fill="#111"/></svg>
<span class="t" style="left:649.64px;top:279px;font-size:11.5px;letter-spacing:0.233px;transform:scaleX(1.0700);color:#1d5b92;text-decoration:underline;">[Manage Custom Periods]</span>
<span class="t" style="left:1099.42px;top:279px;font-size:11px;letter-spacing:-0.150px;transform:scaleX(1.0732);font-weight:bold;-webkit-text-stroke:0.3px;color:#111;">HOURS : All</span>
<span class="t" style="left:1167.96px;top:279px;font-size:11.5px;color:#111;">|</span>
<span class="t" style="left:1175.02px;top:279px;font-size:11.5px;letter-spacing:-0.131px;transform:scaleX(1.0700);color:#1d5b92;text-decoration:underline;">Business</span>
<div class="a" style="left:1223px;top:289px;width:5px;height:1px;background:#1d5b92;"></div>
<span class="t" style="left:1228.96px;top:279px;font-size:11.5px;color:#111;">|</span>
<span class="t" style="left:1235.52px;top:279px;font-size:11.5px;transform:scaleX(1.0700);color:#1d5b92;text-decoration:underline;">Non-Business</span>
<div class="a" style="left:1311px;top:289px;width:5px;height:1px;background:#1d5b92;"></div>
<div class="a" style="left:297px;top:325.5px;width:1031px;height:26px;border:1px solid #6f84a2;border-left:none;border-radius:0 13px 13px 0;background:linear-gradient(to bottom,#d5e2f1 0%,#eef3f9 45%,#ffffff 100%);"></div>
<div class="a" style="left:284.7px;top:325px;width:26.4px;height:26.4px;border:3px solid #174a95;border-radius:50%;background:linear-gradient(to bottom,#ffffff 0%,#e4eefa 55%,#c9dcf4 100%);"></div>
<svg style="left:284.5px;top:324.5px" width="27" height="27" viewBox="0 0 27 27"><path d="M8 8.6 H19 L14.8 13.6 V19.6 L12.2 18 V13.6Z" fill="#5aa2ee" stroke="#2f78d0" stroke-width="0.9" stroke-linejoin="round"/></svg>
<span class="t" style="left:322.73px;top:332px;font-size:13px;letter-spacing:0.248px;transform:scaleX(1.1200);font-weight:bold;-webkit-text-stroke:0.3px;color:#3a5784;">Filter based on inputs</span>
<div class="a" style="left:493.5px;top:330.5px;width:86.5px;height:16.5px;border:1px solid #a9a9a9;border-radius:2px;background:#fff;"></div>
<span class="t" style="left:498.75px;top:333px;font-size:12px;letter-spacing:-0.150px;transform:scaleX(1.0284);color:#111;">ADAP-DC2</span>
<svg style="left:567px;top:335.5px" width="7" height="6" viewBox="0 0 7 6"><path d="M0 0 L7 0 L3.5 6Z" fill="#111"/></svg>
<span class="t" style="left:1039.64px;top:333px;font-size:11px;letter-spacing:-0.137px;transform:scaleX(1.1200);font-weight:bold;-webkit-text-stroke:0.3px;color:#225f9f;">Displaying report for input entries :</span>
<span class="t" style="left:1243.13px;top:333px;font-size:11px;letter-spacing:-0.042px;transform:scaleX(1.1200);font-weight:bold;-webkit-text-stroke:0.3px;color:#111;">ADAP-DC2</span>
<div class="a" style="left:285px;top:357.5px;width:1043px;height:540px;border:1px solid #e2e2e2;background:#f3f3f3;"></div>
<div class="a" style="left:293.5px;top:366.5px;width:1026.5px;height:540px;border-radius:5px;background:#fff;"></div>
<div class="a" style="left:527.5px;top:372px;width:558.5px;height:255.5px;border:1px solid #c4c7ca;border-radius:3px 3px 0 0;background:#fff;"></div>
<div class="a" style="left:528.5px;top:373px;width:556.5px;height:22.5px;border-bottom:1px solid #d0d3d6;background:linear-gradient(to bottom,#f6f7f8 0%,#e6e8ea 50%,#d5d8db 100%);"></div>
<span class="t" style="left:533.63px;top:379px;font-size:11px;letter-spacing:0.535px;transform:scaleX(1.1200);font-weight:bold;-webkit-text-stroke:0.3px;color:#111;">Top User Logon Attempts</span>
<svg style="left:1064px;top:375px" width="17" height="16" viewBox="0 0 17 16"><rect x="0.8" y="7" width="4" height="7.6" fill="#e8d23a" stroke="#6f8a1c" stroke-width="0.9"/><rect x="4.8" y="1" width="4.4" height="13.6" fill="#ee6a5a" stroke="#b73a2a" stroke-width="0.9"/><rect x="9.2" y="4.5" width="4" height="10.1" fill="#5ab0e8" stroke="#2a78b4" stroke-width="0.9"/><circle cx="12.8" cy="12" r="3.6" fill="#8ac62a" stroke="#5a9414" stroke-width="0.6"/><path d="M12.8 9.8 V14.2 M10.6 12 H15" stroke="#fff" stroke-width="1.4"/></svg>
<svg style="left:528px;top:396px" width="557" height="231" viewBox="528 396 557 231"><path d="M581.25 410.8 L594 403 L594 568 L581.25 576.3Z" fill="#dadada"/><path d="M581.25 576.3 L594 568 L1074.25 568 L1062.5 576.3Z" fill="#cdcdcd"/><path d="M594 547.35 H1074.25" stroke="#e0e0e0" stroke-width="1" stroke-dasharray="2.1 2.1"/><path d="M594 526.70 H1074.25" stroke="#e0e0e0" stroke-width="1" stroke-dasharray="2.1 2.1"/><path d="M594 506.05 H1074.25" stroke="#e0e0e0" stroke-width="1" stroke-dasharray="2.1 2.1"/><path d="M594 485.40 H1074.25" stroke="#e0e0e0" stroke-width="1" stroke-dasharray="2.1 2.1"/><path d="M594 464.75 H1074.25" stroke="#e0e0e0" stroke-width="1" stroke-dasharray="2.1 2.1"/><path d="M594 444.10 H1074.25" stroke="#e0e0e0" stroke-width="1" stroke-dasharray="2.1 2.1"/><path d="M594 423.45 H1074.25" stroke="#e0e0e0" stroke-width="1" stroke-dasharray="2.1 2.1"/><path d="M594 568 H1074" stroke="#e6e6e6" stroke-width="1"/><path d="M577.5 576.3 H1074.25" stroke="#7a7a7a" stroke-width="1"/><path d="M581.25 410.8 V575.75" stroke="#bdbdbd" stroke-width="0.8"/><path d="M578.5 555.10 H581.25" stroke="#666" stroke-width="0.9"/><path d="M578.5 534.45 H581.25" stroke="#666" stroke-width="0.9"/><path d="M578.5 513.80 H581.25" stroke="#666" stroke-width="0.9"/><path d="M578.5 493.15 H581.25" stroke="#666" stroke-width="0.9"/><path d="M578.5 472.50 H581.25" stroke="#666" stroke-width="0.9"/><path d="M578.5 451.85 H581.25" stroke="#666" stroke-width="0.9"/><path d="M578.5 431.20 H581.25" stroke="#666" stroke-width="0.9"/><path d="M645.75 418.2 H670.75 V576.3 H645.75Z" fill="#55b035"/><path d="M670.75 418.2 L682.95 410.45 V568.3 L670.75 576.3Z" fill="#387f24"/><path d="M645.75 418.2 L657.95 410.45 H682.95 L670.75 418.2Z" fill="#3b8626"/><path d="M973 525.75 H997.5 V576.3 H973Z" fill="#55b035"/><path d="M997.5 525.75 L1009.7 518 V568.3 L997.5 576.3Z" fill="#387f24"/><path d="M973 525.75 L985.2 518 H1009.7 L997.5 525.75Z" fill="#3b8626"/></svg>
<span class="t" style="left:568.64px;top:572px;font-size:10px;color:#111;">0</span>
<span class="t" style="left:568.64px;top:551px;font-size:10px;color:#111;">5</span>
<span class="t" style="left:562.68px;top:530px;font-size:10px;color:#111;">10</span>
<span class="t" style="left:562.68px;top:510px;font-size:10px;color:#111;">15</span>
<span class="t" style="left:562.98px;top:489px;font-size:10px;color:#111;">20</span>
<span class="t" style="left:562.98px;top:469px;font-size:10px;color:#111;">25</span>
<span class="t" style="left:563.08px;top:448px;font-size:10px;color:#111;">30</span>
<span class="t" style="left:563.08px;top:427px;font-size:10px;color:#111;">35</span>
<span class="t" style="left:550.8px;top:489.5px;font-size:14px;color:#111;transform-origin:50% 50%;transform:translate(-50%,-50%) rotate(-90deg) scaleX(0.81);">COUNT</span>
<span class="t" style="left:662.5px;top:592.5px;font-size:10px;color:#111;transform-origin:right bottom;transform:translate(-100%,-100%) rotate(-22.5deg);">administrator</span>
<span class="t" style="left:998px;top:592.5px;font-size:10px;color:#111;transform-origin:right bottom;transform:translate(-100%,-100%) rotate(-22.5deg);">arumugam</span>
<div class="a" style="left:299px;top:666.5px;width:1015px;height:31px;border-left:1px solid #d6d6d6;border-right:1px solid #e4e4e4;background:linear-gradient(to bottom,#dddddd 0,#e9e9e9 2px,#f7f7f7 5px,#ffffff 8px);"></div>
<svg style="left:303px;top:678px" width="12" height="12" viewBox="0 0 12 12"><circle cx="4.3" cy="4.3" r="3.3" fill="#fff" stroke="#555" stroke-width="1.8"/><path d="M7 7 L10 10" stroke="#555" stroke-width="2.5" stroke-linecap="round"/></svg>
<span class="t" style="left:318.88px;top:680px;font-size:11.5px;letter-spacing:-0.125px;transform:scaleX(1.0700);color:#1d5b92;text-decoration:underline;">Quick Search</span>
<div class="a" style="left:314.5px;top:690px;width:6px;height:1px;background:#1d5b92;"></div>
<div class="a" style="left:610.75px;top:677px;width:21.75px;height:13.5px;border-radius:3px;background:linear-gradient(to bottom,#d0d0d0 0%,#bdbdbd 50%,#acacac 100%);"><svg style="left:0;top:0" width="21.75" height="13.5" viewBox="0 0 22 13"><path d="M7 3 H9 V10 H7Z M14.5 3 L9.5 6.5 L14.5 10Z" fill="#fff"/></svg></div>
<div class="a" style="left:638px;top:677px;width:21.5px;height:13.5px;border-radius:3px;background:linear-gradient(to bottom,#d0d0d0 0%,#bdbdbd 50%,#acacac 100%);"><svg style="left:0;top:0" width="21.5" height="13.5" viewBox="0 0 22 13"><path d="M13.5 3 L8 6.5 L13.5 10Z" fill="#fff"/></svg></div>
<span class="t" style="left:664.40px;top:679px;font-size:11.5px;letter-spacing:-0.150px;transform:scaleX(1.0488);color:#222;">Showing :</span>
<span class="t" style="left:726.02px;top:679px;font-size:11.5px;letter-spacing:0.361px;transform:scaleX(1.0700);color:#222;">1-25 of 50</span>
<div class="a" style="left:790.75px;top:677px;width:21.25px;height:13.5px;border-radius:3px;background:linear-gradient(to bottom,#6aaaf0 0%,#4a8ee0 50%,#3a7ed0 100%);"><svg style="left:0;top:0" width="21.25" height="13.5" viewBox="0 0 22 13"><path d="M8.5 3 L14 6.5 L8.5 10Z" fill="#fff"/></svg></div>
<div class="a" style="left:817.5px;top:677px;width:21.75px;height:13.5px;border-radius:3px;background:linear-gradient(to bottom,#6aaaf0 0%,#4a8ee0 50%,#3a7ed0 100%);"><svg style="left:0;top:0" width="21.75" height="13.5" viewBox="0 0 22 13"><path d="M7.5 3 L12.5 6.5 L7.5 10Z M13 3 H15 V10 H13Z" fill="#fff"/></svg></div>
<span class="t" style="left:846.15px;top:679px;font-size:11.5px;letter-spacing:-0.150px;transform:scaleX(1.0370);color:#222;">Show</span>
<div class="a" style="left:881px;top:675px;width:45.5px;height:16.5px;border:1px solid #a9a9a9;border-radius:2px;background:#fff;"></div>
<span class="t" style="left:886.13px;top:679px;font-size:11.5px;letter-spacing:0.071px;transform:scaleX(1.0700);color:#111;">25</span>
<svg style="left:914px;top:680.5px" width="7" height="6" viewBox="0 0 7 6"><path d="M0 0 L7 0 L3.5 6Z" fill="#111"/></svg>
<span class="t" style="left:932.76px;top:679px;font-size:11.5px;letter-spacing:0.297px;transform:scaleX(1.0700);color:#222;">per page.</span>
<svg style="left:1091.5px;top:675.5px" width="19" height="14" viewBox="0 0 19 14"><rect x="0.6" y="1.6" width="13.5" height="11" fill="#f6f6f6" stroke="#8a8a8a" stroke-width="0.9"/><path d="M0.6 4.6 H14 M5 1.6 V12.6 M9.5 1.6 V12.6" stroke="#9a9a9a" stroke-width="0.8"/><path d="M3 6.2 H4 M3 8.4 H4 M3 10.6 H4 M7 6.2 H8 M7 8.4 H8 M7 10.6 H8" stroke="#777" stroke-width="0.9"/><path d="M9 11.5 L10 8.5 L16.5 1 L18.5 2.6 L12 10Z" fill="#f2b632" stroke="#9a6a10" stroke-width="0.7"/><path d="M9 11.5 L10 8.5 L12 10Z" fill="#444"/></svg>
<span class="t" style="left:1111.00px;top:680px;font-size:11.5px;letter-spacing:0.093px;transform:scaleX(1.0700);color:#2a66a2;">Add/Remove Columns</span>
<div class="a" style="left:299px;top:697.5px;width:1015px;height:24px;background:linear-gradient(to bottom,#ffffff 0%,#f8f8f8 40%,#e1e1e1 100%);border-left:1px solid #d6d6d6;"></div>
<div class="a" style="left:400.25px;top:697.5px;width:2px;height:24px;background:linear-gradient(to right,#f0f0f0,#ffffff);"></div>
<div class="a" style="left:507px;top:697.5px;width:2px;height:24px;background:linear-gradient(to right,#f0f0f0,#ffffff);"></div>
<div class="a" style="left:618.75px;top:697.5px;width:2px;height:24px;background:linear-gradient(to right,#f0f0f0,#ffffff);"></div>
<div class="a" style="left:772px;top:697.5px;width:2px;height:24px;background:linear-gradient(to right,#f0f0f0,#ffffff);"></div>
<div class="a" style="left:884px;top:697.5px;width:2px;height:24px;background:linear-gradient(to right,#f0f0f0,#ffffff);"></div>
<div class="a" style="left:991.25px;top:697.5px;width:2px;height:24px;background:linear-gradient(to right,#f0f0f0,#ffffff);"></div>
<div class="a" style="left:1098.25px;top:697.5px;width:2px;height:24px;background:linear-gradient(to right,#f0f0f0,#ffffff);"></div>
<div class="a" style="left:1206px;top:697.5px;width:2px;height:24px;background:linear-gradient(to right,#f0f0f0,#ffffff);"></div>
<div class="a" style="left:885px;top:697.5px;width:107px;height:24px;background:linear-gradient(to bottom,#7db5f3 0%,#62a2ea 45%,#4d8edb 100%);"></div>
<span class="t" style="left:302.89px;top:705px;font-size:11px;letter-spacing:-0.150px;transform:scaleX(1.1129);font-weight:bold;-webkit-text-stroke:0.3px;color:#444;">Domain</span>
<span class="t" style="left:404.77px;top:705px;font-size:11px;letter-spacing:-0.150px;transform:scaleX(1.0999);font-weight:bold;-webkit-text-stroke:0.3px;color:#444;">User Name</span>
<span class="t" style="left:511.26px;top:705px;font-size:11px;letter-spacing:-0.093px;transform:scaleX(1.1200);font-weight:bold;-webkit-text-stroke:0.3px;color:#444;">Client IP Address</span>
<span class="t" style="left:622.52px;top:705px;font-size:11px;letter-spacing:-0.150px;transform:scaleX(1.0944);font-weight:bold;-webkit-text-stroke:0.3px;color:#444;">Client Host Name</span>
<span class="t" style="left:776.39px;top:705px;font-size:11px;letter-spacing:-0.150px;transform:scaleX(1.1003);font-weight:bold;-webkit-text-stroke:0.3px;color:#444;">Source Computer</span>
<span class="t" style="left:995.39px;top:705px;font-size:11px;letter-spacing:-0.150px;transform:scaleX(1.1166);font-weight:bold;-webkit-text-stroke:0.3px;color:#444;">Event Type</span>
<span class="t" style="left:1102.14px;top:705px;font-size:11px;letter-spacing:-0.113px;transform:scaleX(1.1200);font-weight:bold;-webkit-text-stroke:0.3px;color:#444;">Remarks</span>
<span class="t" style="left:1210.18px;top:705px;font-size:11px;letter-spacing:-0.150px;transform:scaleX(1.0671);font-weight:bold;-webkit-text-stroke:0.3px;color:#444;">Logon Type</span>
<span class="t" style="left:887.68px;top:705px;font-size:11px;letter-spacing:-0.150px;transform:scaleX(1.0614);font-weight:bold;-webkit-text-stroke:0.3px;color:#fff;">Logon Time</span>
<svg style="left:952px;top:710px" width="6.5" height="4.2" viewBox="0 0 10 6"><path d="M0 0 L10 0 L5 6Z" fill="#fff"/></svg>
<div class="a" style="left:299px;top:721.5px;width:1015px;height:55.5px;background:#fff;border-left:1px solid #d6d6d6;border-bottom:1px solid #eef0f3;"></div>
<div class="a" style="left:299px;top:777px;width:1015px;height:90.5px;background:#fafafa;border-left:1px solid #d6d6d6;border-bottom:1px solid #e6e8ec;"></div>
<div class="a" style="left:299px;top:867.5px;width:1015px;height:10px;background:#fff;border-left:1px solid #d6d6d6;"></div>
<div class="a" style="left:400.75px;top:721.5px;width:1px;height:150px;background:#eaeff5;"></div>
<div class="a" style="left:507.5px;top:721.5px;width:1px;height:150px;background:#eaeff5;"></div>
<div class="a" style="left:619.25px;top:721.5px;width:1px;height:150px;background:#eaeff5;"></div>
<div class="a" style="left:772.5px;top:721.5px;width:1px;height:150px;background:#eaeff5;"></div>
<div class="a" style="left:884.5px;top:721.5px;width:1px;height:150px;background:#eaeff5;"></div>
<div class="a" style="left:991.75px;top:721.5px;width:1px;height:150px;background:#eaeff5;"></div>
<div class="a" style="left:1098.75px;top:721.5px;width:1px;height:150px;background:#eaeff5;"></div>
<div class="a" style="left:1206.5px;top:721.5px;width:1px;height:150px;background:#eaeff5;"></div>
<div class="a" style="left:1313px;top:697px;width:1px;height:180px;background:#ececec;"></div>
<span class="t" style="left:303.00px;top:745px;font-size:11.5px;letter-spacing:-0.150px;transform:scaleX(0.9549);color:#111;">ADAP</span>
<span class="t" style="left:405.01px;top:745px;font-size:11.5px;letter-spacing:0.214px;transform:scaleX(1.0700);color:#111;">administrator</span>
<span class="t" style="left:511.52px;top:745px;font-size:11.5px;letter-spacing:0.275px;transform:scaleX(1.0700);color:#111;">172.18.96.64</span>
<span class="t" style="left:622.89px;top:745px;font-size:11.5px;letter-spacing:-0.150px;color:#111;">VARDHAMAN-1841</span>
<span class="t" style="left:776.26px;top:745px;font-size:11.5px;letter-spacing:0.206px;transform:scaleX(1.0700);color:#111;">adap-dc2</span>
<span class="t" style="left:888.50px;top:739px;font-size:11.5px;letter-spacing:0.075px;transform:scaleX(1.0700);color:#111;">Apr 03,2014</span>
<span class="t" style="left:888.01px;top:751px;font-size:11.5px;letter-spacing:0.230px;transform:scaleX(1.0700);color:#111;">06:31:13 PM</span>
<span class="t" style="left:995.67px;top:745px;font-size:11.5px;letter-spacing:-0.150px;transform:scaleX(1.0052);color:#111;">Success</span>
<span class="t" style="left:1103.00px;top:727px;font-size:11.5px;letter-spacing:-0.041px;transform:scaleX(1.0700);color:#111;">A session was</span>
<span class="t" style="left:1102.51px;top:739px;font-size:11.5px;letter-spacing:-0.021px;transform:scaleX(1.0700);color:#111;">disconnected</span>
<span class="t" style="left:1102.88px;top:751px;font-size:11.5px;letter-spacing:0.082px;transform:scaleX(1.0700);color:#111;">from a Window</span>
<span class="t" style="left:1102.38px;top:763px;font-size:11.5px;letter-spacing:0.268px;transform:scaleX(1.0700);color:#111;">Station.</span>
<span class="t" style="left:1210.54px;top:745px;font-size:11.5px;color:#111;">-</span>
<span class="t" style="left:303.00px;top:818px;font-size:11.5px;letter-spacing:-0.150px;transform:scaleX(0.9549);color:#111;">ADAP</span>
<span class="t" style="left:405.01px;top:818px;font-size:11.5px;letter-spacing:0.255px;transform:scaleX(1.0700);color:#111;">arumugam</span>
<span class="t" style="left:511.52px;top:818px;font-size:11.5px;letter-spacing:0.320px;transform:scaleX(1.0700);color:#111;">192.168.22.120</span>
<span class="t" style="left:622.51px;top:812px;font-size:11.5px;letter-spacing:0.129px;transform:scaleX(1.0700);color:#111;">arumugam-</span>
<span class="t" style="left:622.51px;top:824px;font-size:11.5px;letter-spacing:0.038px;transform:scaleX(1.0700);color:#111;">0153.csez.zohocorpin.com</span>
<span class="t" style="left:776.26px;top:818px;font-size:11.5px;letter-spacing:0.206px;transform:scaleX(1.0700);color:#111;">adap-dc2</span>
<span class="t" style="left:888.50px;top:812px;font-size:11.5px;letter-spacing:0.075px;transform:scaleX(1.0700);color:#111;">Apr 03,2014</span>
<span class="t" style="left:888.01px;top:824px;font-size:11.5px;letter-spacing:0.230px;transform:scaleX(1.0700);color:#111;">05:41:46 PM</span>
<span class="t" style="left:995.67px;top:818px;font-size:11.5px;letter-spacing:-0.150px;transform:scaleX(1.0052);color:#111;">Success</span>
<span class="t" style="left:1103.00px;top:806px;font-size:11.5px;letter-spacing:-0.150px;transform:scaleX(1.0536);color:#111;">An account was</span>
<span class="t" style="left:1102.63px;top:818px;font-size:11.5px;letter-spacing:-0.124px;transform:scaleX(1.0700);color:#111;">successfully</span>
<span class="t" style="left:1102.14px;top:830px;font-size:11.5px;letter-spacing:0.312px;transform:scaleX(1.0700);color:#111;">logged on.</span>
<span class="t" style="left:1210.02px;top:782px;font-size:11.5px;letter-spacing:0.263px;transform:scaleX(1.0700);color:#111;">Remote</span>
<span class="t" style="left:1209.89px;top:794px;font-size:11.5px;letter-spacing:0.297px;transform:scaleX(1.0700);color:#111;">Interactive</span>
<span class="t" style="left:1210.26px;top:806px;font-size:11.5px;letter-spacing:0.491px;transform:scaleX(1.0700);color:#111;">(Terminal</span>
<span class="t" style="left:1210.38px;top:818px;font-size:11.5px;letter-spacing:-0.030px;transform:scaleX(1.0700);color:#111;">Services, Remote</span>
<span class="t" style="left:1210.02px;top:830px;font-size:11.5px;letter-spacing:0.215px;transform:scaleX(1.0700);color:#111;">Desktop or</span>
<span class="t" style="left:1210.02px;top:842px;font-size:11.5px;letter-spacing:0.263px;transform:scaleX(1.0700);color:#111;">Remote</span>
<span class="t" style="left:1211.00px;top:854px;font-size:11.5px;letter-spacing:-0.035px;transform:scaleX(1.0700);color:#111;">Assistance)</span>
</div>
</body></html>
